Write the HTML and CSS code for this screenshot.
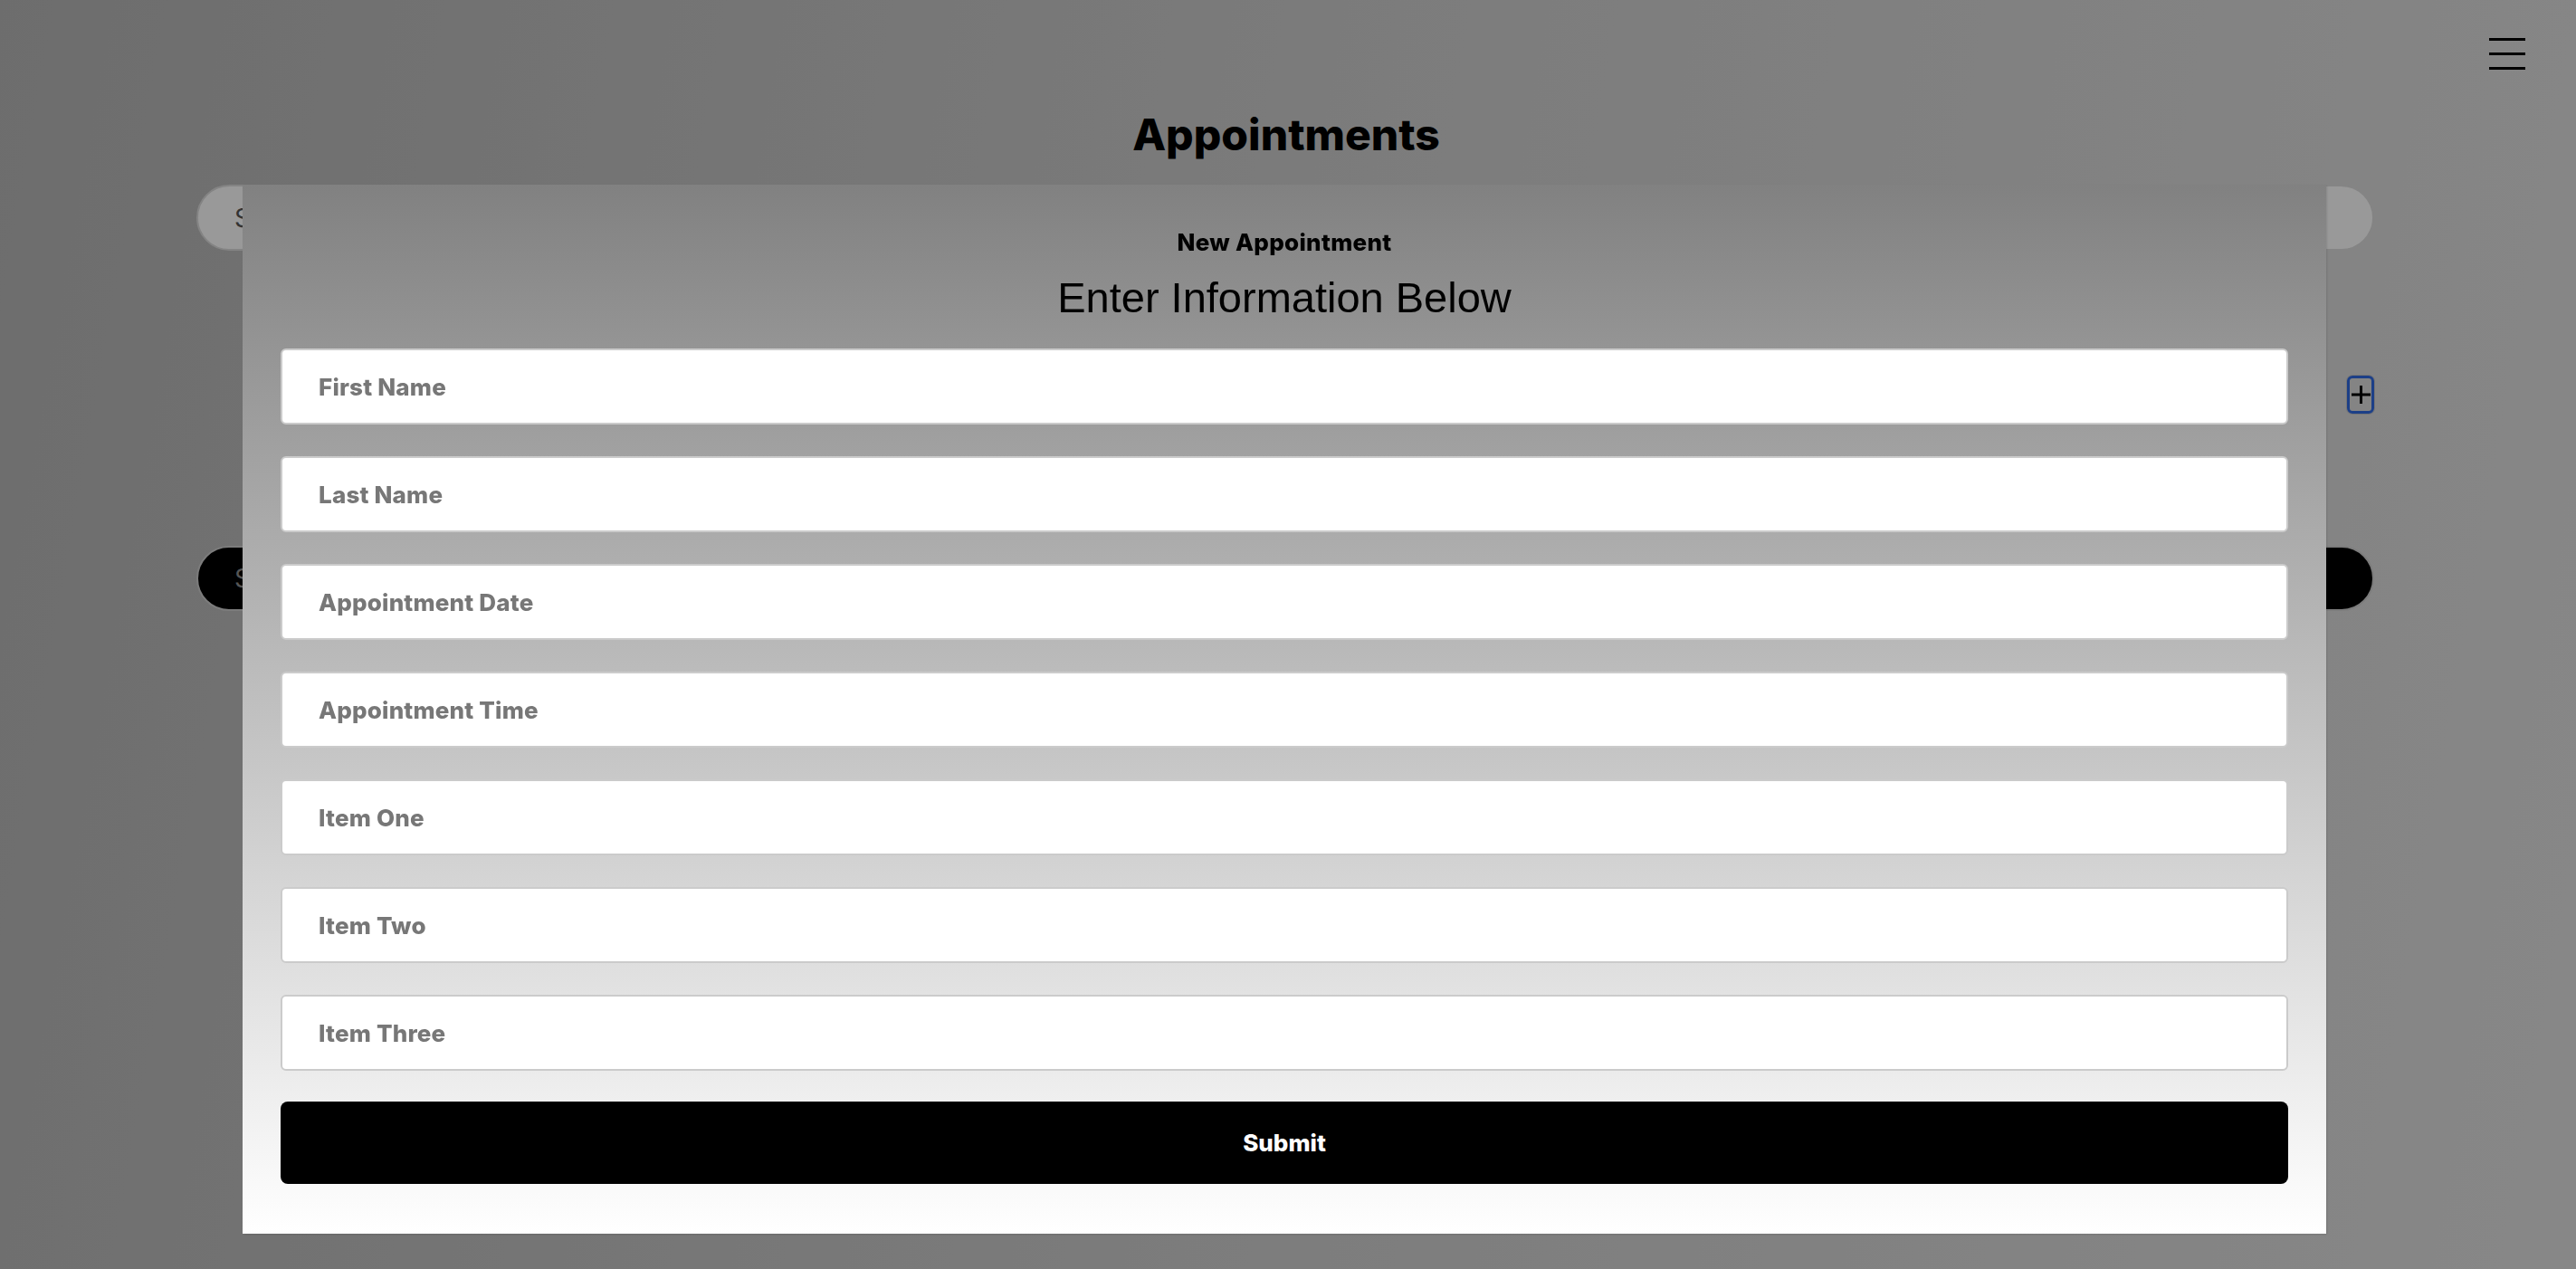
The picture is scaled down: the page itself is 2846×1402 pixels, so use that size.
FILE: index.html
```html
<!DOCTYPE html>
<html lang="en">
<head>
<meta charset="utf-8">
<title>Appointments</title>
<link rel="stylesheet" href="styles.css">
</head>
<body>
  <div class="page">
    <header class="topbar">
      <button class="menu" aria-label="Menu">
        <span></span><span></span><span></span>
      </button>
    </header>
    <h1 class="title">Appointments</h1>
    <main class="content">
      <input class="search" type="text" placeholder="Search appointments">
      <div class="add-row">
        <button class="add" aria-label="Add appointment">
          <svg viewBox="0 0 21 20" width="21" height="20"><path d="M0 10H21M10.5 0V20" stroke="#000" stroke-width="3" fill="none"/></svg>
        </button>
      </div>
      <input class="search dark" type="text" placeholder="Search by date">
    </main>
  </div>

  <div class="overlay">
    <form class="modal">
      <h2 class="modal-title">New Appointment</h2>
      <p class="modal-sub">Enter Information Below</p>
      <div class="fields">
        <input class="field" type="text" placeholder="First Name">
        <input class="field" type="text" placeholder="Last Name">
        <input class="field" type="text" placeholder="Appointment Date">
        <input class="field" type="text" placeholder="Appointment Time">
        <input class="field" type="text" placeholder="Item One">
        <input class="field" type="text" placeholder="Item Two">
        <input class="field" type="text" placeholder="Item Three">
        <button class="submit" type="button">Submit</button>
      </div>
    </form>
  </div>
</body>
</html>
```

FILE: styles.css
```css
* { box-sizing: border-box; }

html, body {
  margin: 0;
  height: 100%;
}

body {
  font-family: "Inter", "Roboto", sans-serif;
  background: linear-gradient(100deg, #b6b6b6 0%, #cfcfcf 50%, #e2e2e2 100%);
  overflow: hidden;
}

.page {
  min-height: 100vh;
}

.topbar {
  display: flex;
  justify-content: flex-end;
  padding: 42px 56px 0 0;
}

.menu {
  display: flex;
  flex-direction: column;
  gap: 13px;
  width: 40px;
  padding: 0;
  border: 0;
  background: none;
}

.menu span {
  display: block;
  height: 3px;
  background: #000;
}

.title {
  margin: 43px 0 0;
  padding-right: 4px;
  text-align: center;
  font-size: 48px;
  line-height: 58px;
  font-weight: 800;
  color: #000;
}

.content {
  width: 2406px;
  margin: 26px auto 0;
  position: relative;
  left: -3px;
}

.search {
  display: block;
  width: 100%;
  height: 73px;
  padding: 0 40px;
  border: 2px solid #dcdcdc;
  border-radius: 40px;
  background: #fff;
  font-family: "Inter", sans-serif;
  font-size: 28px;
  color: #555;
  outline: none;
}

.search::placeholder { color: #555; }

.search.dark {
  margin-top: 146px;
  height: 72px;
  background: #000;
  border-color: #cfcfcf;
}

.search.dark::placeholder { color: #8e8e8e; }

.add-row {
  display: flex;
  justify-content: flex-end;
  margin-top: 138px;
}

.add {
  display: flex;
  align-items: center;
  justify-content: center;
  width: 30px;
  height: 42px;
  padding: 0;
  border: 3px solid #3069e2;
  border-radius: 6px;
  background: transparent;
  box-shadow: 0 0 0 1px #c4c4c4;
}

.add svg { display: block; }

.overlay {
  position: fixed;
  inset: 0;
  background: rgba(0, 0, 0, 0.4);
  display: flex;
  justify-content: center;
  align-items: flex-start;
  padding-top: 204px;
}

.modal {
  width: 2302px;
  margin-left: -8px;
  padding: 48px 42px 55px;
  background: linear-gradient(180deg, #818181 0%, #ffffff 100%);
  box-shadow: 1px 1px 2px rgba(0, 0, 0, 0.12);
  text-align: center;
}

.modal-title {
  margin: 0;
  font-size: 26px;
  line-height: 32px;
  font-weight: 800;
  letter-spacing: 0.3px;
  color: #000;
}

.modal-sub {
  margin: 17px 0 0;
  font-family: "Liberation Sans", Arial, sans-serif;
  font-size: 47px;
  line-height: 56px;
  font-weight: 400;
  color: #000;
}

.fields {
  display: flex;
  flex-direction: column;
  gap: 35px;
  margin-top: 28px;
}

.field {
  display: block;
  width: 100%;
  height: 84px;
  padding: 0 40px;
  border: 2px solid #cbcbcb;
  border-radius: 6px;
  background: #fff;
  font-family: "Inter", sans-serif;
  font-size: 26px;
  font-weight: 800;
  letter-spacing: 0.2px;
  color: #333;
  outline: none;
}

.field::placeholder { color: #777; }

.submit {
  display: block;
  width: 100%;
  height: 91px;
  margin-top: -1px;
  border: 0;
  border-radius: 8px;
  background: #000;
  color: #fff;
  font-family: "Inter", sans-serif;
  font-size: 26px;
  font-weight: 800;
}
```
